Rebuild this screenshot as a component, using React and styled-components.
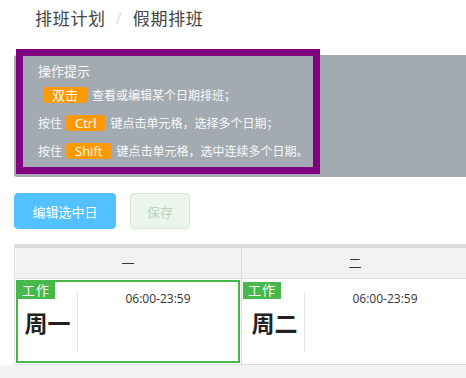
import React from 'react';
import styled, { createGlobalStyle } from 'styled-components';

const GlobalStyle = createGlobalStyle`
  html, body {
    margin: 0;
    padding: 0;
    background: #fff;
    overflow: hidden;
  }
  body {
    font-family: "Open Sans", "Noto Sans CJK SC", sans-serif;
    color: #333;
  }
`;

const Page = styled.div`
  width: 466px;
  padding-left: 14px;
  box-sizing: border-box;
  overflow: hidden;
`;

const Crumbs = styled.div`
  display: flex;
  align-items: center;
  height: 34px;
  padding-left: 21px;
  font-size: 17px;
  color: #444;
  letter-spacing: 0.7px;
`;

const Sep = styled.span`
  color: #ddd;
  padding: 0 10px;
`;

const TipPanel = styled.div`
  display: flow-root;
  margin-top: 21px;
  margin-right: -20px;
  background: #a3aab1;
  border-radius: 3px;
  padding: 0 0 3px 2px;
`;

const TipBox = styled.div`
  width: 275px;
  margin-top: -6px;
  border: 7px solid #800080;
  padding: 6px 0 2px 15px;
  color: #fafafa;
  font-size: 12px;
`;

const TipTitle = styled.div`
  font-size: 13px;
  line-height: 19px;
`;

const TipLine = styled.div`
  display: flex;
  align-items: center;
  height: 28px;
  white-space: nowrap;
`;

const Key = styled.span`
  display: inline-block;
  background: #ff9900;
  color: #fff;
  font-size: 13px;
  border-radius: 3px;
  padding: 0 9px;
  height: 16px;
  line-height: 16px;
  margin: 0 5px 0 ${p => (p.$lead ? '5px' : '4px')};
`;

const Actions = styled.div`
  display: flex;
  gap: 14px;
  margin-top: 16px;
`;

const Button = styled.button`
  height: 36px;
  width: ${p => p.$w}px;
  border-radius: 4px;
  font-family: inherit;
  font-size: 13px;
  cursor: pointer;
  background: ${p => (p.$primary ? '#53c0ff' : '#ebf5ec')};
  color: ${p => (p.$primary ? '#fff' : '#b9d5bc')};
  border: 1px solid ${p => (p.$primary ? '#53c0ff' : '#d5ead7')};
`;

const Table = styled.div`
  margin-top: 15px;
  border-top: 4px solid #dcdcdc;
  border-left: 1px solid #e4e4e4;
  width: ${7 * 227}px;
`;

const Row = styled.div`
  display: grid;
  grid-template-columns: repeat(7, 226px);
  column-gap: 1px;
  background: #dddddd;
  border-bottom: 1px solid #dddddd;
`;

const HeadCell = styled.div`
  height: 30px;
  line-height: 30px;
  text-align: center;
  background: #f2f2f2;
  font-size: 13px;
  color: #333;
`;

const Cell = styled.div`
  position: relative;
  height: 85px;
  padding: 1px;
  box-sizing: border-box;
  background: #fff;
`;

const CellInner = styled.div`
  display: flex;
  height: 100%;
  box-sizing: border-box;
  border: 2px solid ${p => (p.$selected ? '#47b94b' : 'transparent')};
`;

const Tag = styled.span`
  position: absolute;
  top: 3px;
  left: ${p => (p.$selected ? '2px' : '1px')};
  background: #47b94b;
  color: #fff;
  font-size: 13px;
  line-height: 17px;
  padding: 0 5px;
  letter-spacing: 1px;
`;

const DayName = styled.div`
  width: 59px;
  display: flex;
  align-items: center;
  justify-content: center;
  font-size: 23px;
  font-weight: 700;
  color: #222;
`;

const Divider = styled.div`
  align-self: center;
  height: 60px;
  border-left: 1px solid #e5e5e5;
`;

const Time = styled.div`
  flex: 1;
  text-align: center;
  padding-top: 9px;
  font-size: 12px;
  line-height: 16px;
  color: #333;
`;

const Footer = styled.div`
  height: 30px;
  background: #f4f4f4;
  margin-left: -14px;
  width: ${7 * 227 + 14}px;
`;

const heads = ['一', '二', '三', '四', '五', '六', '日'];
const days = [
  { name: '周一', selected: true },
  { name: '周二' },
  { name: '周三' },
  { name: '周四' },
  { name: '周五' },
  { name: '周六' },
  { name: '周日' },
];

export default function App() {
  return (
    <>
      <GlobalStyle />
      <Page>
        <Crumbs>
          排班计划<Sep>/</Sep>假期排班
        </Crumbs>

        <TipPanel>
          <TipBox>
            <TipTitle>操作提示</TipTitle>
            <TipLine>
              <Key $lead>双击</Key>查看或编辑某个日期排班；
            </TipLine>
            <TipLine>
              按住<Key>Ctrl</Key>键点击单元格，选择多个日期；
            </TipLine>
            <TipLine>
              按住<Key>Shift</Key>键点击单元格，选中连续多个日期。
            </TipLine>
          </TipBox>
        </TipPanel>

        <Actions>
          <Button $primary $w={102}>编辑选中日</Button>
          <Button $w={60}>保存</Button>
        </Actions>

        <Table>
          <Row>
            {heads.map(h => (
              <HeadCell key={h}>{h}</HeadCell>
            ))}
          </Row>
          <Row>
            {days.map(d => (
              <Cell key={d.name}>
                <CellInner $selected={d.selected}>
                  <DayName>{d.name}</DayName>
                  <Divider />
                  <Time>06:00-23:59</Time>
                </CellInner>
                <Tag $selected={d.selected}>工作</Tag>
              </Cell>
            ))}
          </Row>
        </Table>
        <Footer />
      </Page>
    </>
  );
}
